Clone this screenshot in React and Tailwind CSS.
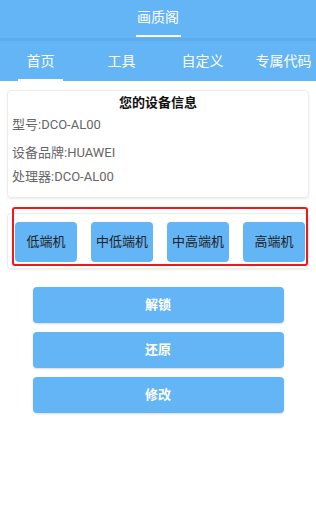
import React from 'react';

const tabs = ['首页', '工具', '自定义', '专属代码'];
const levels = ['低端机', '中低端机', '中高端机', '高端机'];
const actions = ['解锁', '还原', '修改'];

const font = { fontFamily: 'Roboto, "Noto Sans CJK SC", sans-serif' };

export default function App() {
  return (
    <div className="w-[316px] h-[524px] bg-white" style={font}>
      <header className="bg-[#64b5f6] text-white">
        <div className="h-[38px] flex flex-col items-center">
          <div className="text-[14px] leading-none pt-[10px] h-[35px]">画质阁</div>
          <div className="w-[45px] h-[2px] bg-white" />
        </div>
        <div className="h-[3px] bg-[#5eaceb]" />
        <nav className="flex h-[40px]">
          {tabs.map((t, i) => (
            <div key={t} className="w-[81px] flex flex-col items-center shrink-0">
              <div className="h-[38px] flex items-center text-[14px] pt-[2px]">{t}</div>
              {i === 0 && <div className="w-[45px] h-[2px] bg-white" />}
            </div>
          ))}
        </nav>
      </header>

      <main className="px-[7px] pt-[9px]">
        <section className="rounded-[4px] border border-[#ececec] shadow-[0_1px_2px_rgba(0,0,0,0.08)] h-[108px] px-[4px]">
          <h2 className="text-center text-[13px] font-bold text-[#111] pt-[3px] leading-[18px]">您的设备信息</h2>
          <div className="text-[13px] text-[#666] leading-[18px]">
            <p className="mt-[4px]">型号:DCO-AL00</p>
            <p className="mt-[10px]">设备品牌:HUAWEI</p>
            <p className="mt-[6px]">处理器:DCO-AL00</p>
          </div>
        </section>

        <section className="mt-[15px] rounded-[4px] border border-[#ececec] shadow-[0_1px_2px_rgba(0,0,0,0.08)] pb-[2px] relative">
          <div className="absolute left-[4px] right-[0px] top-[-7px] bottom-[2px] border-2 border-[#f01818] rounded-[3px] pointer-events-none" />
          <div className="flex gap-[14px] pl-[7px] pt-[8px] pb-[4px]">
            {levels.map((l) => (
              <button key={l} className="w-[62px] h-[40px] shrink-0 rounded-[4px] bg-[#64b5f6] text-[13px] text-[#222]">
                {l}
              </button>
            ))}
          </div>
        </section>

        <div className="flex flex-col items-center gap-[9px] mt-[18px]">
          {actions.map((a) => (
            <button
              key={a}
              className="w-[251px] h-[36px] rounded-[4px] bg-[#64b5f6] text-white text-[13px] font-bold shadow-[0_1px_2px_rgba(0,0,0,0.15)]"
            >
              {a}
            </button>
          ))}
        </div>
      </main>
    </div>
  );
}
